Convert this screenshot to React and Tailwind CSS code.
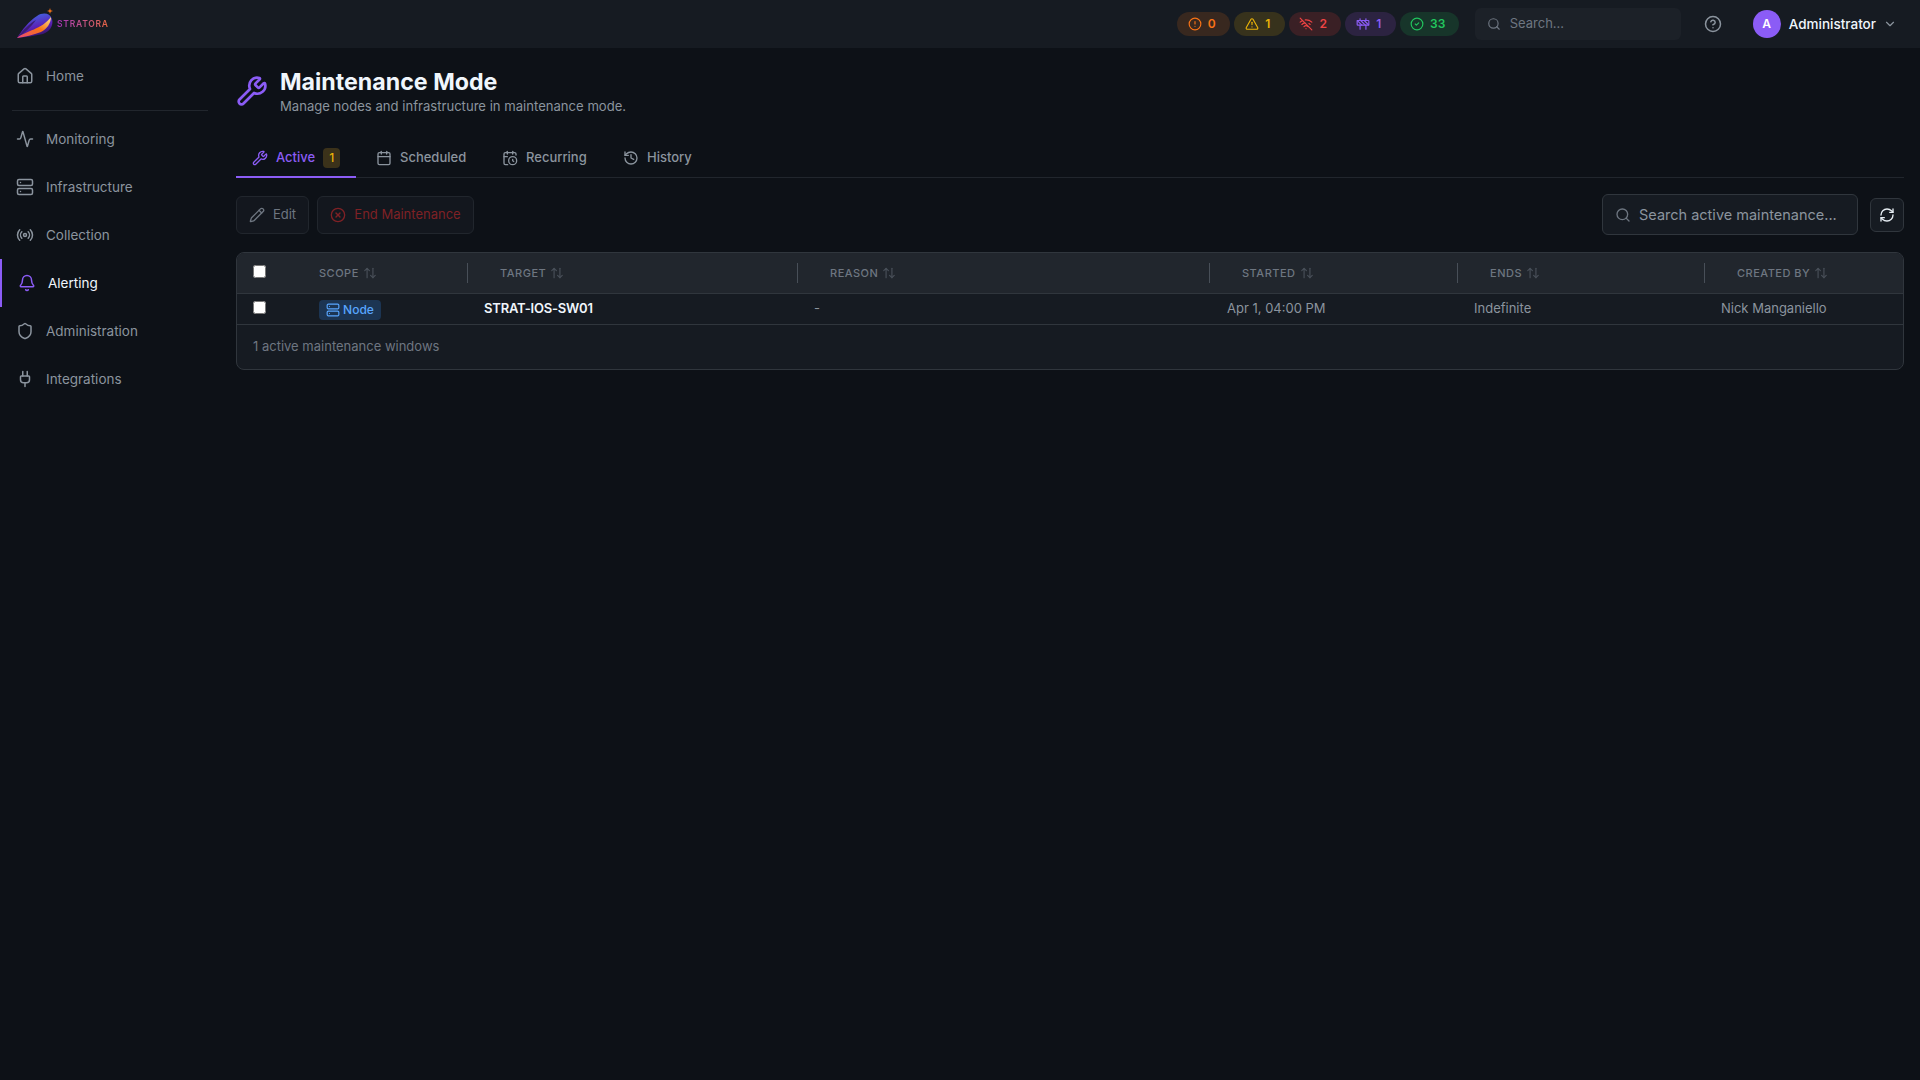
import {
  Activity, ArrowUpDown, Bell, Calendar, CalendarClock, ChevronDown, CircleAlert, CircleCheck,
  CircleHelp, CircleX, Construction, History, House, Pencil, Plug, Radio, RefreshCw, Search,
  Server, Shield, TriangleAlert, WifiOff, Wrench,
} from 'lucide-react';

const navItems = [
  { label: 'Monitoring', Icon: Activity },
  { label: 'Infrastructure', Icon: Server },
  { label: 'Collection', Icon: Radio },
  { label: 'Alerting', Icon: Bell, active: true },
  { label: 'Administration', Icon: Shield },
  { label: 'Integrations', Icon: Plug },
];

const pills = [
  { Icon: CircleAlert, value: '0', cls: 'w-[53px] bg-[#38281f] text-[#f97316]' },
  { Icon: TriangleAlert, value: '1', cls: 'w-[51px] bg-[#37321c] text-[#eab308]' },
  { Icon: WifiOff, value: '2', cls: 'w-[52px] bg-[#3a2025] text-[#ef4444]' },
  { Icon: Construction, value: '1', cls: 'w-[51px] bg-[#2c2341] text-[#8b5cf6]' },
  { Icon: CircleCheck, value: '33', cls: 'w-[59px] bg-[#17352a] text-[#22c55e]' },
];

const tabs = [
  { label: 'Scheduled', Icon: Calendar, cls: 'w-[126px] pl-5' },
  { label: 'Recurring', Icon: CalendarClock, cls: 'w-[120px] pl-5' },
  { label: 'History', Icon: History, cls: 'w-[112px] pl-[21px]' },
];

const columns = [
  { label: 'TARGET', cls: 'w-[330px]' },
  { label: 'REASON', cls: 'w-[412px]' },
  { label: 'STARTED', cls: 'w-[248px]' },
  { label: 'ENDS', cls: 'w-[247px]' },
  { label: 'CREATED BY', cls: '' },
];

// Comet logo drawn by hand
const Logo = () => (
  <svg width="38" height="32" viewBox="0 0 38 32" className="shrink-0">
    <defs>
      <linearGradient id="planet" x1="0.3" y1="0" x2="0.7" y2="1">
        <stop offset="0" stopColor="#3f6fe8" />
        <stop offset="0.55" stopColor="#5b21b6" />
        <stop offset="1" stopColor="#2a1250" />
      </linearGradient>
      <linearGradient id="trail" x1="0" y1="1" x2="1" y2="0">
        <stop offset="0" stopColor="#e8487c" />
        <stop offset="0.55" stopColor="#f97316" />
        <stop offset="1" stopColor="#fde68a" />
      </linearGradient>
    </defs>
    <path d="M1 30 C6 22 13 13 21 8 C27 4 34 5 36 11 C38 18 33 24 27 26 C18 28 9 29 1 30Z" fill="url(#planet)" />
    <path d="M1 30 C7 22 14 15 20 12 C15 19 9 25 1 30Z" fill="#3b1d73" />
    <path d="M1 30 C11 22 25 22 35 9 C35 15 31 21 25 24 C17 27 9 29 1 30Z" fill="url(#trail)" />
    <path d="M34 0 L34.7 2.3 L37 3 L34.7 3.7 L34 6 L33.3 3.7 L31 3 L33.3 2.3Z" fill="#f97316" />
  </svg>
);

const TopBar = () => (
  <header className="flex h-12 items-center bg-[#161b22] pl-[16px]">
    <Logo />
    <span className="ml-[3px] mt-[1px] bg-gradient-to-r from-[#a52fb8] to-[#e8643c] bg-clip-text text-[8.5px] font-semibold tracking-[0.75px] text-transparent">
      STRATORA
    </span>
    <div className="ml-auto flex items-center gap-1">
      {pills.map(({ Icon, value, cls }, i) => (
        <div key={i} className={`flex h-6 items-center justify-center gap-[6px] rounded-full pr-[3px] text-xs font-semibold ${cls}`}>
          <Icon className="h-[14px] w-[14px]" />
          {value}
        </div>
      ))}
    </div>
    <div className="ml-4 flex h-8 w-[206px] items-center gap-[9px] rounded-md bg-[#1c2128] pl-3">
      <Search className="h-[14px] w-[14px] text-[#6e7681]" />
      <span className="text-[13px] text-[#6e7681]">Search...</span>
    </div>
    <CircleHelp className="ml-[23px] h-[18px] w-[18px] text-[#8b949e]" />
    <div className="ml-[31px] flex h-7 w-7 items-center justify-center rounded-full bg-[#8b5cf6] text-xs font-semibold text-white">A</div>
    <span className="ml-2 text-[13.5px] font-medium text-[#f0f6fc]">Administrator</span>
    <ChevronDown className="ml-[7px] mr-[23px] h-[14px] w-[14px] text-[#8b949e]" />
  </header>
);

const NavRow = ({ label, Icon, active }) => (
  <div className={`flex h-12 items-center gap-3 pl-4 text-[13.5px] ${active ? 'border-l-2 border-[#8b5cf6] text-[#f0f6fc]' : 'text-[#8b949e]'}`}>
    <Icon className={`h-[18px] w-[18px] ${active ? 'text-[#8b5cf6]' : 'text-[#8b949e]'}`} />
    {label}
  </div>
);

const Sidebar = () => (
  <aside className="w-[220px] shrink-0 pt-1">
    <NavRow label="Home" Icon={House} />
    <div className="mx-3 mb-1 mt-[10px] h-px w-[196px] bg-[#21262d]" />
    {navItems.map((item) => (
      <NavRow key={item.label} {...item} />
    ))}
  </aside>
);

const HeaderCell = ({ label, cls, first }) => (
  <th className={`relative h-10 p-0 text-left align-middle font-normal ${cls}`}>
    <div className={`flex items-center gap-1 text-[11px] font-medium tracking-[0.5px] text-[#6e7681] ${first ? 'pl-4' : 'pl-[33px]'}`}>
      {label}
      <ArrowUpDown className="h-[14px] w-[14px] text-[#484f58]" />
    </div>
    {!first && <span className="absolute left-0 top-[10px] h-5 w-px bg-[#484f58]" />}
  </th>
);

const MaintenanceTable = () => (
  <div className="overflow-hidden rounded-lg border border-[#30363d] bg-[#161b22]">
    <table className="w-full table-fixed border-collapse">
      <thead>
        <tr className="border-b border-[#30363d] bg-[#21262d]">
          <th className="h-10 w-[66px] p-0 pl-4 text-left align-top">
            <input type="checkbox" className="mt-[12px] block h-[13px] w-[13px]" />
          </th>
          <HeaderCell label="SCOPE" cls="w-[164px]" first />
          {columns.map((col) => (
            <HeaderCell key={col.label} {...col} />
          ))}
        </tr>
      </thead>
      <tbody>
        <tr className="h-[31px] border-b border-[#30363d] text-[13px]">
          <td className="p-0 pl-4">
            <input type="checkbox" className="-mt-[3px] block h-[13px] w-[13px]" />
          </td>
          <td className="p-0 pl-4">
            <div className="flex pt-[2px]">
              <span className="flex h-5 w-[62px] items-center justify-center gap-[3px] rounded bg-[#1c3553] text-xs font-medium text-[#58a6ff]">
                <Server className="h-[14px] w-[14px]" />
                Node
              </span>
            </div>
          </td>
          <td className="p-0 pl-[17px] font-semibold tracking-[-0.2px] text-[#f0f6fc]">STRAT-IOS-SW01</td>
          <td className="p-0 pl-[17px] text-[#8b949e]">-</td>
          <td className="p-0 pl-[18px] text-[#8b949e]">Apr 1, 04:00 PM</td>
          <td className="p-0 pl-[17px] text-[#8b949e]">Indefinite</td>
          <td className="p-0 pl-[17px] text-[#8b949e]">Nick Manganiello</td>
        </tr>
      </tbody>
    </table>
    <div className="flex h-11 items-center px-4 text-[13px] text-[#6e7681]">1 active maintenance windows</div>
  </div>
);

export default function App() {
  return (
    <div className="min-h-screen bg-[#0d1117] font-['Inter',sans-serif]">
      <TopBar />
      <div className="flex">
        <Sidebar />
        <main className="min-w-0 flex-1 pl-4 pr-4 pt-[21px]">
          <div className="flex items-center gap-3">
            <Wrench className="mb-1 h-8 w-8 text-[#8b5cf6]" />
            <div>
              <h1 className="text-[23.2px] leading-[27px] font-bold text-[#f0f6fc]">Maintenance Mode</h1>
              <p className="text-[13.1px] leading-5 text-[#8b949e]">Manage nodes and infrastructure in maintenance mode.</p>
            </div>
          </div>

          <div className="mt-[22px] flex h-[40px] items-stretch border-b border-[#21262d] text-[13px] font-medium">
            <div className="-mb-px flex w-[120px] items-center gap-2 border-b-2 border-[#8b5cf6] pl-4 pt-px text-[#8b5cf6]">
              <Wrench className="h-4 w-4" />
              Active
              <span className="flex h-5 w-[17px] items-center justify-center rounded bg-[#3b321a] text-xs text-[#eab308]">1</span>
            </div>
            {tabs.map(({ label, Icon, cls }) => (
              <div key={label} className={`flex items-center gap-2 pt-px text-[#8b949e] ${cls}`}>
                <Icon className="h-4 w-4" />
                {label}
              </div>
            ))}
          </div>

          <div className="mb-[17px] mt-4 flex items-center">
            <button className="flex h-[38px] w-[73px] items-center justify-center gap-2 rounded-md border border-[#21262d] bg-[#13171e] text-[13px] text-[#6e7681]">
              <Pencil className="h-4 w-4" />
              Edit
            </button>
            <button className="ml-2 flex h-[38px] w-[157px] items-center justify-center gap-2 rounded-md border border-[#21262d] bg-[#13171e] text-[13px] text-[#7f2125]">
              <CircleX className="h-4 w-4" />
              End Maintenance
            </button>
            <div className="ml-auto flex h-[41px] w-[256px] items-center gap-2 rounded-md border border-[#30363d] bg-[#161b22] pl-3">
              <Search className="h-4 w-4 text-[#6e7681]" />
              <span className="text-[14.5px] text-[#8b949e]">Search active maintenance...</span>
            </div>
            <button className="ml-3 flex h-[34px] w-[34px] items-center justify-center rounded-md border border-[#30363d] bg-[#161b22] text-[#e6edf3]">
              <RefreshCw className="h-4 w-4" />
            </button>
          </div>

          <MaintenanceTable />
        </main>
      </div>
    </div>
  );
}
